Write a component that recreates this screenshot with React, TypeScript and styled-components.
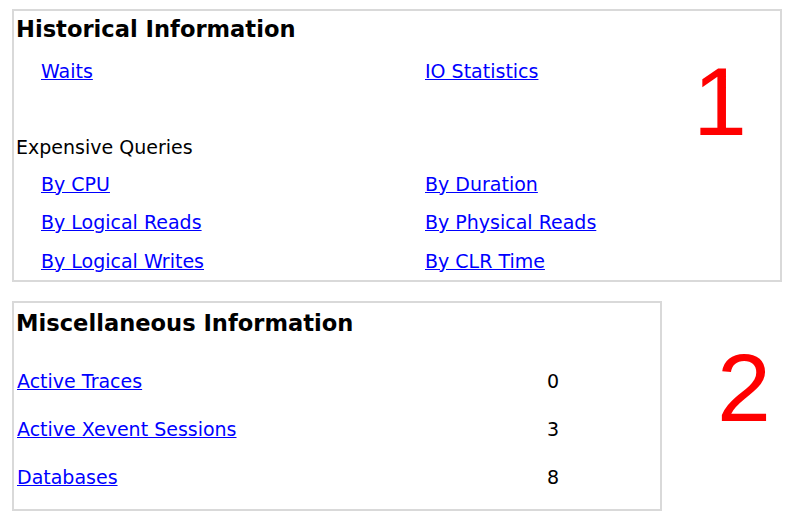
import React from "react";
import styled, { createGlobalStyle } from "styled-components";

const Global = createGlobalStyle`
  html, body { margin: 0; padding: 0; background: #ffffff; }
  body { font-family: "DejaVu Sans", Verdana, sans-serif; font-size: 19px; color: #000; }
  * { box-sizing: border-box; }
`;

const Page = styled.div`
  padding: 9px 0 0 12px;
  display: flex;
  flex-direction: column;
  gap: 19px;
`;

const Panel = styled.section<{ $width: number; $pt: number; $pb: number }>`
  position: relative;
  width: ${(p) => p.$width}px;
  border: 2px solid #d9d9d9;
  padding: ${(p) => p.$pt}px 0 ${(p) => p.$pb}px 0;
  display: flex;
  flex-direction: column;
`;

const Title = styled.h2`
  margin: 0;
  padding-left: 2px;
  font-family: "DejaVu Sans", Verdana, sans-serif;
  font-weight: bold;
  font-size: 22.6px;
  line-height: 26px;
  white-space: nowrap;
`;

const LinkGrid = styled.div<{ $mt: number }>`
  display: grid;
  grid-template-columns: 384px auto;
  row-gap: 16.5px;
  padding-left: 27px;
  margin-top: ${(p) => p.$mt}px;
`;

const Link = styled.a`
  color: #0000ff;
  text-decoration: underline;
  line-height: 22px;
  white-space: nowrap;
  cursor: pointer;
`;

const Cell = styled.div`
  line-height: 22px;
`;

const SubHeading = styled.div<{ $mt: number }>`
  margin-top: ${(p) => p.$mt}px;
  padding-left: 2px;
  line-height: 22px;
  white-space: nowrap;
`;

const StatList = styled.div`
  display: grid;
  grid-template-columns: 530px auto;
  row-gap: 26px;
  padding-left: 3px;
  margin-top: 34.3px;
`;

const StatValue = styled.span`
  line-height: 22px;
`;

const Callout = styled.div`
  font-family: "Liberation Sans", Arial, sans-serif;
  font-size: 97px;
  line-height: 97px;
  color: #ff0000;
`;

const OverlayCallout = styled(Callout)`
  position: absolute;
  left: 679px;
  top: 42px;
`;

const Row = styled.div`
  display: flex;
  align-items: flex-start;
`;

const SideCallout = styled(Callout)`
  margin-left: 55px;
  margin-top: 38px;
`;

const topLinks = ["Waits", "IO Statistics"];
const queryLinks = [
  "By CPU",
  "By Duration",
  "By Logical Reads",
  "By Physical Reads",
  "By Logical Writes",
  "By CLR Time",
];
const stats: [string, string][] = [
  ["Active Traces", "0"],
  ["Active Xevent Sessions", "3"],
  ["Databases", "8"],
];

export default function App() {
  return (
    <>
      <Global />
      <Page>
        <Panel $width={770} $pt={4.5} $pb={8}>
          <Title>Historical Information</Title>
          <LinkGrid $mt={18}>
            {topLinks.map((l) => (
              <Cell key={l}>
                <Link>{l}</Link>
              </Cell>
            ))}
          </LinkGrid>
          <SubHeading $mt={54}>Expensive Queries</SubHeading>
          <LinkGrid $mt={15}>
            {queryLinks.map((l) => (
              <Cell key={l}>
                <Link>{l}</Link>
              </Cell>
            ))}
          </LinkGrid>
          <OverlayCallout>1</OverlayCallout>
        </Panel>
        <Row>
          <Panel $width={650} $pt={7} $pb={21.7}>
            <Title>Miscellaneous Information</Title>
            <StatList>
              {stats.map(([name, value]) => (
                <React.Fragment key={name}>
                  <Cell>
                    <Link>{name}</Link>
                  </Cell>
                  <StatValue>{value}</StatValue>
                </React.Fragment>
              ))}
            </StatList>
          </Panel>
          <SideCallout>2</SideCallout>
        </Row>
      </Page>
    </>
  );
}
